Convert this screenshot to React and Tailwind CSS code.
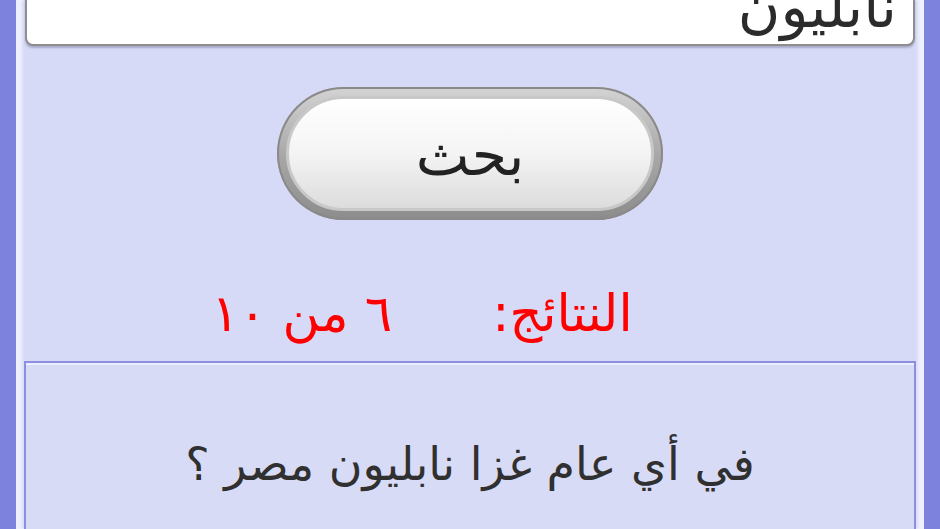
import React from 'react'

const arabic = { fontFamily: '"DejaVu Sans", "Noto Sans", sans-serif' }

export default function App() {
  return (
    <div dir="rtl" style={arabic} className="w-[940px] h-[529px] overflow-hidden bg-[#7d82dc] px-[16px]">
      <div className="h-full bg-[#d7daf6] px-[9px] flex flex-col shadow-[inset_6px_0_3px_#eef0ff,inset_-6px_0_3px_#eef0ff]">
        {/* search field, scrolled past its top */}
        <div className="-mt-[20px] h-[66px] rounded-[8px] bg-white border-2 border-[#8e8e8e] shadow-[0_2px_2px_rgba(80,80,120,0.35)] flex items-end pr-[16px] pb-[8px] overflow-hidden">
          <span className="text-[58px] leading-none text-[#2b2b2b]">نابليون</span>
        </div>

        <div className="flex justify-center mt-[41px]">
          <button className="w-[386px] h-[133px] rounded-full p-[9px] bg-gradient-to-b from-[#d4d4d4] via-[#a9a9a9] to-[#8c8c8c] shadow-[inset_0_0_0_2px_#8a8a8a]">
            <div className="w-full h-full rounded-full border-[3px] border-[#c8c8c8] bg-gradient-to-b from-white via-[#f4f4f4] to-[#dcdcdc] flex items-center justify-center">
              <span className="text-[57px] text-[#222] leading-none mt-[4px]">بحث</span>
            </div>
          </button>
        </div>

        <div className="flex justify-center gap-[100px] mt-[68px] pr-[96px] text-[51px] leading-none text-[#ff0000]">
          <span>النتائج:</span>
          <span>٦ من ١٠</span>
        </div>

        <div className="mt-[22px] flex-1 -mx-[1px] border-2 border-[#8a8fe2] border-b-0 bg-[#d8dbf6] shadow-[inset_0_2px_0_#eceeff] flex justify-center pt-[78px]">
          <span className="text-[46px] leading-none text-[#303030]">في أي عام غزا نابليون مصر ؟</span>
        </div>
      </div>
    </div>
  )
}
